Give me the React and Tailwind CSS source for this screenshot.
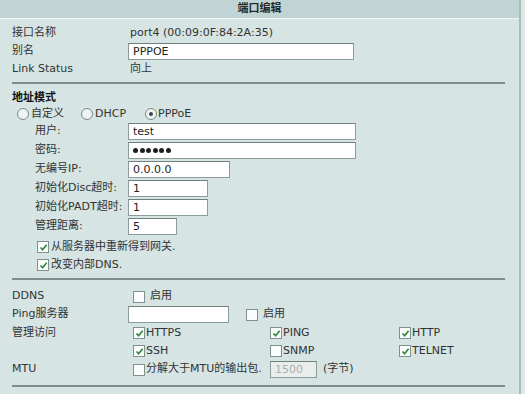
import React from 'react'

const font = { fontFamily: '"DejaVu Sans", "Noto Sans CJK SC", sans-serif' }

const Check = ({ on }) => (
  <span className="inline-flex w-[12px] h-[12px] shrink-0 items-center justify-center border border-[#7f908f] bg-[#fbfdfc]">
    {on && (
      <svg width="9" height="9" viewBox="0 0 9 9">
        <path d="M1.5 4.5 L3.6 6.7 L7.6 1.8" fill="none" stroke="#2f8a3c" strokeWidth="1.7" />
      </svg>
    )}
  </span>
)

const Radio = ({ on }) => (
  <span className="inline-flex w-[12px] h-[12px] shrink-0 items-center justify-center rounded-full border border-[#7a8b8a] bg-[#eef4f3]">
    {on && <span className="w-[4px] h-[4px] rounded-full bg-[#3d4a4a]" />}
  </span>
)

const Input = ({ value, w, disabled }) => (
  <div
    className={`h-[17px] border border-[#8c9c9b] border-t-[#6f7f7e] px-[4px] flex items-center text-[11px] leading-none ${disabled ? 'bg-[#e9eeec] text-[#a9b0ae]' : 'bg-white text-[#222]'}`}
    style={{ width: w }}
  >
    {value}
  </div>
)

const Row = ({ label, indent, h = 'h-[19px]', children }) => (
  <div className={`flex items-center ${h}`}>
    <div className={`w-[116px] shrink-0 ${indent ? 'pl-[23px]' : ''}`}>{label}</div>
    <div className="flex items-center">{children}</div>
  </div>
)

const Divider = ({ className }) => <div className={`w-[493px] h-[2px] bg-[#7c8e8d] ${className}`} />

const Dots = () => (
  <span className="flex items-center gap-[1.5px]">
    {[0, 1, 2, 3, 4, 5].map(i => (
      <span key={i} className="w-[5px] h-[5px] rounded-full bg-[#1e1e1e]" />
    ))}
  </span>
)

const App = () => {
  return (
    <div className="w-[525px] h-[394px] bg-[#dfe8e7] overflow-hidden" style={font}>
      <div className="w-[521px] h-[394px] bg-[#d6e4e3] border-r-2 border-[#a9bbbb] text-[11px] text-[#333]">
        <div className="h-[19px] bg-[#c0d4d5] border-b border-[#eef5f4] flex items-center justify-center font-bold text-[11px] text-[#1f2a2a]">
          端口编辑
        </div>

        <div className="pl-[12px] pt-[6px]">
          <Row label="接口名称" h="h-[17px]">
            <span className="pl-[2px]">port4 (00:09:0F:84:2A:35)</span>
          </Row>
          <Row label="别名" h="h-[18px]">
            <Input value="PPPOE" w="226px" />
          </Row>
          <Row label="Link Status" h="h-[18px]">
            <span className="pl-[2px]">向上</span>
          </Row>

          <Divider className="mt-[4px]" />

          <div className="h-[16px] mt-[6px] flex items-center font-bold text-[#111]">地址模式</div>
          <div className="h-[16px] flex items-center pl-[5px]">
            <span className="flex items-center gap-[2px] w-[64px]"><Radio />自定义</span>
            <span className="flex items-center gap-[2px] w-[64px]"><Radio />DHCP</span>
            <span className="flex items-center gap-[1px]"><Radio on />PPPoE</span>
          </div>

          <Row label="用户:" indent><Input value="test" w="228px" /></Row>
          <Row label="密码:" indent><Input value={<Dots />} w="228px" /></Row>
          <Row label="无编号IP:" indent><Input value="0.0.0.0" w="102px" /></Row>
          <Row label="初始化Disc超时:" indent><Input value="1" w="80px" /></Row>
          <Row label="初始化PADT超时:" indent><Input value="1" w="80px" /></Row>
          <Row label="管理距离:" indent><Input value="5" w="49px" /></Row>

          <div className="h-[18px] mt-[2px] flex items-center gap-[2px] pl-[25px]"><Check on />从服务器中重新得到网关.</div>
          <div className="h-[18px] flex items-center gap-[2px] pl-[25px]"><Check on />改变内部DNS.</div>

          <Divider className="mt-[4px]" />

          <Row label="DDNS" h="h-[17px] mt-[8px]">
            <span className="pl-[5px] flex items-center gap-[5px]"><Check />启用</span>
          </Row>
          <Row label="Ping服务器">
            <Input value="" w="101px" />
            <span className="ml-[17px] flex items-center gap-[5px]"><Check />启用</span>
          </Row>
          <Row label="管理访问" h="h-[18px]">
            <div className="grid grid-cols-[137px_129px_80px] pl-[5px]">
              <span className="flex items-center gap-[1px]"><Check on />HTTPS</span>
              <span className="flex items-center gap-[1px]"><Check on />PING</span>
              <span className="flex items-center gap-[1px]"><Check on />HTTP</span>
            </div>
          </Row>
          <Row label="" h="h-[18px]">
            <div className="grid grid-cols-[137px_129px_80px] pl-[5px]">
              <span className="flex items-center gap-[1px]"><Check on />SSH</span>
              <span className="flex items-center gap-[1px]"><Check />SNMP</span>
              <span className="flex items-center gap-[1px]"><Check on />TELNET</span>
            </div>
          </Row>
          <Row label="MTU">
            <span className="pl-[5px] flex items-center gap-[1px] w-[142px]"><Check />分解大于MTU的输出包.</span>
            <Input value="1500" w="47px" disabled />
            <span className="ml-[6px]">(字节)</span>
          </Row>

          <Divider className="mt-[6px]" />
        </div>
      </div>
    </div>
  )
}

export default App
